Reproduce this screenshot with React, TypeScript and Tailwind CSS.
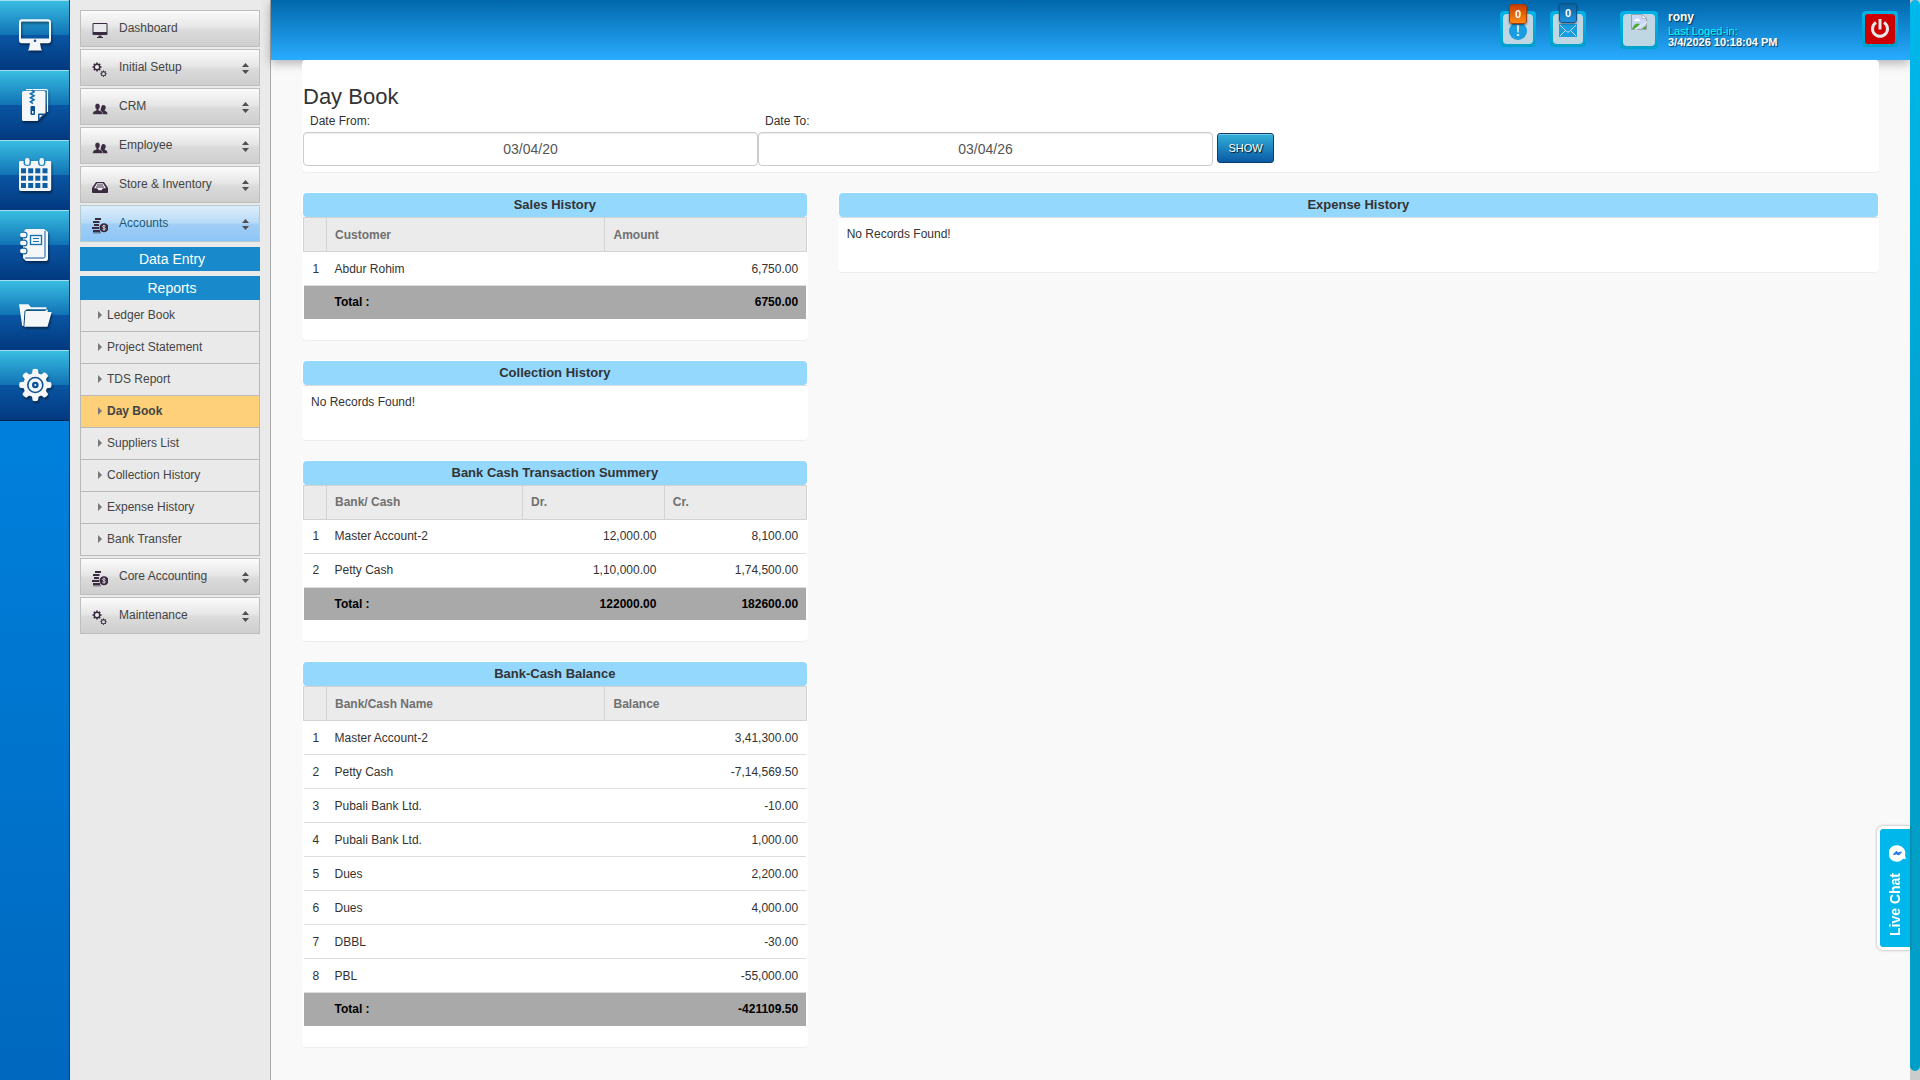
import { useState } from 'react';
import type { ReactNode } from 'react';

type IconProps = { className?: string };

/* ---------- Rail icons ---------- */

function RailSvg({ children }: { children: ReactNode }) {
  return (
    <svg
      viewBox="0 0 34 34"
      className="h-[34px] w-[34px] fill-[#f4f6f8] drop-shadow-[1px_2px_1px_rgba(0,0,0,0.45)]"
      aria-hidden="true"
    >
      {children}
    </svg>
  );
}

function DesktopIcon() {
  return (
    <RailSvg>
      <path
        fillRule="evenodd"
        d="M4 1.3h26a3 3 0 0 1 3 3v18a3 3 0 0 1-3 3H4a3 3 0 0 1-3-3v-18a3 3 0 0 1 3-3zM4 3.5a1 1 0 0 0-1 1v16h28v-16a1 1 0 0 0-1-1z"
      />
      <path d="M12 25h10l1 5.500 1 2H10l1-2z" />
      <circle cx="17" cy="22.800" r="1.300" fill="#0b4f94" />
    </RailSvg>
  );
}

function ArchiveIcon() {
  return (
    <RailSvg>
      <path d="M8 1.600h20a1.500 1.500 0 0 1 1.500 1.500V24" fill="none" stroke="#f4f6f8" strokeWidth="1.200" />
      <path d="M5.500 3H26a1.500 1.500 0 0 1 1.500 1.500V25l-8 8h-14A1.500 1.500 0 0 1 4 31.500v-27A1.500 1.500 0 0 1 5.500 3z" />
      <path d="M20 32.500v-6a1 1 0 0 1 1-1h6z" fill="#0b4f94" />
      <path d="M21.500 30v-3h3z" />
      <path
        d="M14 2l2 1.800-3.500 2 3.500 2-3.500 2 3.500 2-3.500 2 2.500 1.800"
        fill="none"
        stroke="#1570b0"
        strokeWidth="1.600"
      />
      <rect x="12.500" y="18" width="4.500" height="9" rx="1" fill="#0b4f94" />
      <rect x="14" y="23" width="1.500" height="2.500" />
    </RailSvg>
  );
}

function CalendarIcon() {
  return (
    <RailSvg>
      <path d="M2 3h30a1.200 1.200 0 0 1 1.200 1.200V31A2 2 0 0 1 31 33H3a2 2 0 0 1-2-2V4.200A1.200 1.200 0 0 1 2 3z" />
      <g fill="#1e84bf">
        <rect x="5.500" y="1" width="7.500" height="7" rx="3.500" />
        <rect x="20" y="1" width="7.500" height="7" rx="3.500" />
      </g>
      <rect x="7" y="0" width="4.500" height="7" rx="2.200" />
      <rect x="21.500" y="0" width="4.500" height="7" rx="2.200" />
      {[10.3, 17.7, 25].map((y) =>
        [3, 10.2, 17.3, 24.5].map((x) => <rect key={`${x}-${y}`} x={x} y={y} width="5" height="5" fill="#0e5ea3" />),
      )}
    </RailSvg>
  );
}

function NotebookIcon() {
  return (
    <RailSvg>
      <path d="M8 1h18l4 3v27a2 2 0 0 1-2 2H8l-3-3V4z" />
      <path d="M27 3v25.500a1.500 1.500 0 0 1-1.500 1.500H7" fill="none" stroke="#0d5aa0" strokeWidth="1" />
      <rect x="12.500" y="7.500" width="11" height="9" fill="none" stroke="#1272b3" strokeWidth="1.300" />
      <path d="M15 10.500h6M15 13.500h6" stroke="#1272b3" strokeWidth="1.200" />
      {[7, 15, 23].map((y) => (
        <g key={y}>
          <circle cx="6" cy={y} r="3.500" fill="#0d5aa0" />
          <rect x="2" y={y - 2.2} width="6.500" height="4.400" rx="2.200" />
        </g>
      ))}
    </RailSvg>
  );
}

function FolderIcon() {
  return (
    <RailSvg>
      <path d="M1 6.300h9.500l2.500 3h15.500v2H9L6.500 13 5.500 28H4.200z" />
      <path d="M7.500 13H27l1.500-1.300H30L29.500 14H33.700L29.500 28.700H6.300z" />
    </RailSvg>
  );
}

function GearIcon() {
  return (
    <RailSvg>
      {[0, 45, 90, 135, 180, 225, 270, 315].map((angle) => (
        <path key={angle} d="M13.800 7l.8-5.500Q17.300 0 20 1.500l.8 5.500z" transform={`rotate(${angle} 17.300 17)`} />
      ))}
      <circle cx="17.300" cy="17" r="12" />
      <circle cx="17.300" cy="17" r="7.500" fill="none" stroke="#0b5299" strokeWidth="1.600" />
      <circle cx="17.300" cy="17" r="3.300" fill="#0b5299" />
      <circle cx="17.300" cy="17" r="1" />
    </RailSvg>
  );
}

/* ---------- Menu icons ---------- */

function MonitorSmall({ className }: IconProps) {
  return (
    <svg viewBox="0 0 16 16" className={className} aria-hidden="true">
      <path d="M1.500 0h13A1 1 0 0 1 15.500 1v10a1 1 0 0 1-1 1h-13a1 1 0 0 1-1-1V1a1 1 0 0 1 1-1z" />
      <path d="M1.500 1h13v8h-13z" fill="#e9e9e9" />
      <path d="M6.500 12.500h3v1.500H11V15H5v-1h1.500z" />
    </svg>
  );
}

function CogsSmall({ className }: IconProps) {
  const teeth = [0, 45, 90, 135];
  return (
    <svg viewBox="0 0 16 16" className={className} aria-hidden="true">
      {teeth.map((a) => (
        <g key={a}>
          <rect x="4.200" y="0.500" width="1.600" height="9" transform={`rotate(${a} 5 5)`} />
          <rect x="11" y="8.500" width="1" height="6.400" transform={`rotate(${a} 11.500 11.700)`} />
        </g>
      ))}
      <circle cx="5" cy="5" r="3.400" />
      <circle cx="5" cy="5" r="2" fill="#ececec" />
      <circle cx="11.500" cy="11.700" r="2.400" />
      <circle cx="11.500" cy="11.700" r="1.500" fill="#dcdcdc" />
    </svg>
  );
}

function UsersSmall({ className }: IconProps) {
  return (
    <svg viewBox="0 0 16 16" className={className} aria-hidden="true">
      <path d="M11.500 4c1.400 0 2.200 1 2.200 2.400 0 1-.4 2-1 2.600v.8c1.600.5 2.800 1.200 2.800 3.400H10L8.500 9.500 9.300 6c.2-1.200 1-2 2.200-2z" />
      <path
        d="M5.500 2.500C7.200 2.500 8 3.700 8 5.300c0 1.200-.5 2.400-1.200 3v1c2 .6 4 1.400 4 4.200H.5c0-2.800 1.800-3.600 3.700-4.200v-1C3.500 7.700 3 6.500 3 5.300c0-1.600.8-2.800 2.500-2.800z"
        stroke="#e4e4e4"
        strokeWidth="0.500"
      />
    </svg>
  );
}

function InboxSmall({ className }: IconProps) {
  return (
    <svg viewBox="0 0 16 16" className={className} aria-hidden="true">
      <path d="M4 3h8l4 6v4a1 1 0 0 1-1 1H1a1 1 0 0 1-1-1V9z" />
      <path d="M5 4.300h6l3 5h-3l-1.500 2h-3L5 9.300H2z" fill="#efefef" />
      <path d="M5 6h6M4 8h8" stroke="#3a2b40" strokeWidth="1" />
    </svg>
  );
}

function CoinsSmall({ className }: IconProps) {
  return (
    <svg viewBox="0 0 16 16" className={className} aria-hidden="true">
      <path d="M3 0h6v2H3zM1 3h6.500v2H1zM2 6h5v2H2zM0 9h7v2H0zM1 12h7v2H1zM1 14.500h8v.8H1z" />
      <circle cx="12" cy="9.700" r="4.500" />
      <path
        d="M13.600 8.200c-.6-.9-3-.9-3.100.3-.1 1.400 3 .9 3 2.300 0 1.300-2.500 1.300-3.200.4M12 6.800v5.800"
        fill="none"
        stroke="#e8e8e8"
        strokeWidth="0.800"
      />
    </svg>
  );
}

function SortArrows() {
  return (
    <svg viewBox="0 0 7 11" className="h-[11px] w-[7px] fill-[#4f4f4f]" aria-hidden="true">
      <path d="M3.500 0L7 4H0zM3.500 11L0 7h7z" />
    </svg>
  );
}

/* ---------- Data ---------- */

const railItems = [
  { label: 'Desktop', Icon: DesktopIcon },
  { label: 'Archive', Icon: ArchiveIcon },
  { label: 'Calendar', Icon: CalendarIcon },
  { label: 'Notebook', Icon: NotebookIcon },
  { label: 'Files', Icon: FolderIcon },
  { label: 'Settings', Icon: GearIcon },
];

const topMenu = [
  { label: 'Dashboard', Icon: MonitorSmall, expandable: false },
  { label: 'Initial Setup', Icon: CogsSmall, expandable: true },
  { label: 'CRM', Icon: UsersSmall, expandable: true },
  { label: 'Employee', Icon: UsersSmall, expandable: true },
  { label: 'Store & Inventory', Icon: InboxSmall, expandable: true },
  { label: 'Accounts', Icon: CoinsSmall, expandable: true },
];

const bottomMenu = [
  { label: 'Core Accounting', Icon: CoinsSmall, expandable: true },
  { label: 'Maintenance', Icon: CogsSmall, expandable: true },
];

const reports = [
  'Ledger Book',
  'Project Statement',
  'TDS Report',
  'Day Book',
  'Suppliers List',
  'Collection History',
  'Expense History',
  'Bank Transfer',
];

const balances = [
  ['Master Account-2', '3,41,300.00'],
  ['Petty Cash', '-7,14,569.50'],
  ['Pubali Bank Ltd.', '-10.00'],
  ['Pubali Bank Ltd.', '1,000.00'],
  ['Dues', '2,200.00'],
  ['Dues', '4,000.00'],
  ['DBBL', '-30.00'],
  ['PBL', '-55,000.00'],
];

/* ---------- Pieces ---------- */

type MenuItemProps = {
  label: string;
  Icon: (props: IconProps) => ReactNode;
  expandable: boolean;
  active?: boolean;
};

function MenuItem({ label, Icon, expandable, active }: MenuItemProps) {
  return (
    <button
      type="button"
      className={`flex h-[37px] w-full items-center border pr-[10px] pl-[11px] text-left text-xs ${
        active
          ? 'border-[#b3cbd3] bg-[linear-gradient(#deeefb,#b9dcf8_46%,#9fcdf6_54%,#8ec6f6)] text-[#1b5878]'
          : 'border-[#bfbfbf] bg-[linear-gradient(#fbfbfb,#e6e6e6_46%,#dbdbdb_54%,#cecece)] text-[#444]'
      }`}
    >
      <Icon className="mt-1 h-4 w-4 shrink-0 fill-[#3a2b40]" />
      <span className="flex-1 pb-0.5 pl-[11px]">{label}</span>
      {expandable && (
        <span className="pt-0.5">
          <SortArrows />
        </span>
      )}
    </button>
  );
}

function SectionButton({ label }: { label: string }) {
  return (
    <button type="button" className="mt-[5px] block h-6 w-full bg-[#188acb] pl-1 text-center text-sm leading-6 text-white">
      {label}
    </button>
  );
}

function Panel({ title, children }: { title: string; children: ReactNode }) {
  return (
    <section className="mb-5 rounded bg-white p-px shadow-[0_1px_1px_rgba(0,0,0,0.05)]">
      <h2 className="h-6 rounded bg-[#94d8fe] text-center text-[13px] leading-6 font-bold text-[#333]">{title}</h2>
      {children}
    </section>
  );
}

function EmptyPanel({ title }: { title: string }) {
  return (
    <Panel title={title}>
      <p className="h-[54px] border-t border-[#ddd] px-2 pt-2 text-xs leading-[17px]">No Records Found!</p>
    </Panel>
  );
}

type LedgerProps = {
  title: string;
  columns: string[];
  rows: string[][];
  totals: string[];
  nameWidth: string;
};

function LedgerPanel({ title, columns, rows, totals, nameWidth }: LedgerProps) {
  return (
    <Panel title={title}>
      <table className="mb-5 w-full table-fixed border-collapse text-xs">
        <colgroup>
          <col className="w-[23px]" />
          <col className={nameWidth} />
          {columns.slice(1).map((c) => (
            <col key={c} />
          ))}
        </colgroup>
        <thead>
          <tr className="h-[34px] bg-[#ebebeb] text-left text-[#707070]">
            <th className="border border-[#d3d3d3]" />
            {columns.map((c) => (
              <th key={c} className="border border-[#d3d3d3] px-2 font-bold">
                {c}
              </th>
            ))}
          </tr>
        </thead>
        <tbody>
          {rows.map(([name, ...values], i) => (
            <tr key={i} className="h-[34px] border-b border-[#ddd]">
              <td className="pl-[9px]">{i + 1}</td>
              <td className="px-2">{name}</td>
              {values.map((v, j) => (
                <td key={j} className="px-2 text-right">
                  {v}
                </td>
              ))}
            </tr>
          ))}
          <tr className="h-[33px] bg-[#a9a9a9] font-bold text-black">
            <td />
            <td className="px-2">Total :</td>
            {totals.map((t) => (
              <td key={t} className="px-2 text-right">
                {t}
              </td>
            ))}
          </tr>
        </tbody>
      </table>
    </Panel>
  );
}

function DateField({ id, label, initial }: { id: string; label: string; initial: string }) {
  const [value, setValue] = useState(initial);
  return (
    <div className="max-w-[455px] flex-1">
      <label htmlFor={id} className="block pb-0.5 pl-[7px] text-xs leading-[17px]">
        {label}
      </label>
      <input
        id={id}
        type="text"
        value={value}
        onChange={(e) => setValue(e.target.value)}
        className="block h-[34px] w-full rounded border border-[#ccc] bg-white text-center text-sm text-[#555] shadow-[inset_0_1px_1px_rgba(0,0,0,0.075)]"
      />
    </div>
  );
}

const frame = 'h-9 w-9 rounded bg-[linear-gradient(#00b3e6,#00a0cc)] p-[3px]';

function Header() {
  return (
    <header className="flex h-[60px] items-start justify-end bg-[linear-gradient(#0067ab,#29acff)] pt-[11px] pr-3 shadow-[0_3px_10px_rgba(0,0,0,0.3)]">
      <button type="button" aria-label="Alerts" className={`relative mr-[14px] ${frame}`}>
        <span className="flex h-full items-center justify-center rounded bg-[#bfd6e3]">
          <svg viewBox="0 0 18 18" className="mt-1 h-[18px] w-[18px]" aria-hidden="true">
            <circle cx="9" cy="9" r="9" fill="#189de0" />
            <path d="M7.800 3h2.400l-.4 7.500H8.200zM7.800 12h2.400v2H7.800z" fill="#d5e3ec" />
          </svg>
        </span>
        <span className="absolute -top-[7px] left-[9px] flex h-5 w-[18px] items-center justify-center rounded-[3px] border border-[#a63a00] bg-[linear-gradient(#c83c00,#ff8a12)] text-[11px] font-bold text-white shadow-[0_1px_2px_rgba(0,0,0,0.5)]">
          0
        </span>
      </button>
      <button type="button" aria-label="Messages" className={`relative mr-[34px] ${frame}`}>
        <span className="flex h-full items-center justify-center rounded bg-[#bfd6e3]">
          <svg viewBox="0 0 18 13" className="mt-[3px] h-[13px] w-[18px]" aria-hidden="true">
            <rect width="18" height="13" fill="#189de0" />
            <path
              d="M1 1l6.500 6.500q1.500 1.300 3 0L17 1M1 12l5.500-5.500M17 12l-5.500-5.500"
              fill="none"
              stroke="#c9dde9"
              strokeWidth="1"
            />
          </svg>
        </span>
        <span className="absolute -top-[8px] left-[9px] flex h-5 w-[18px] items-center justify-center rounded-[3px] border border-[#08548c] bg-[linear-gradient(#0a5f9c,#2292dc)] text-[11px] font-bold text-white shadow-[0_1px_2px_rgba(0,0,0,0.5)]">
          0
        </span>
      </button>
      <div className="h-[38px] w-[38px] rounded bg-[linear-gradient(#00b3e6,#00a0cc)] p-[3px]">
        {/* broken avatar placeholder */}
        <div className="flex h-full justify-center rounded bg-[#bfd6e3]">
          <svg viewBox="0 0 16 16" className="h-4 w-4" role="img" aria-label="avatar">
            <path d="M.5.5h10.500l4.500 4V15.500H.5z" fill="#c8d8f6" stroke="#9aa3ad" />
            <path d="M11 .5v4h4.500z" fill="#fff" stroke="#9aa3ad" strokeWidth="0.700" />
            <path d="M3 7q0-2 2-2 1-1.500 2.500 0Q9 5.200 9 7z" fill="#fff" />
            <path d="M1 15q3-7 8-5l-5 5z" fill="#4faa35" />
            <path d="M4 15.500l12-7.500" stroke="#dfe8f0" strokeWidth="1.800" />
            <path d="M10.500 15l4.500-3.500V15z" fill="#4faa35" />
          </svg>
        </div>
      </div>
      <div className="ml-[10px] w-[194px] text-[11px] leading-[11px] text-white [text-shadow:1px_1px_1px_rgba(0,0,0,0.6)]">
        <div className="pb-0.5 text-xs leading-[13px] font-bold">rony</div>
        <div className="text-[#00ffff]">Last Loged-in:</div>
        <div className="font-bold">3/4/2026 10:18:04 PM</div>
      </div>
      <button type="button" aria-label="Log out" className={frame}>
        <span className="flex h-full items-center justify-center rounded-[3px] bg-[#cc0000]">
          <svg viewBox="0 0 20 20" className="h-5 w-5" fill="none" stroke="#e9e9e9" strokeWidth="3" aria-hidden="true">
            <path d="M6 3.500a7.500 7.500 0 1 0 8 0M10 0v10.500" />
          </svg>
        </span>
      </button>
    </header>
  );
}

export default function App() {
  return (
    <div className="flex min-h-screen bg-[#f9f9f9] font-['Liberation_Sans',Arial,sans-serif] text-[#333]">
      {/* Icon rail */}
      <nav
        aria-label="Shortcuts"
        className="w-[70px] shrink-0 border-r border-[#00467f] bg-[linear-gradient(#0090f0,#0068be)]"
      >
        {railItems.map(({ label, Icon }) => (
          <button
            key={label}
            type="button"
            aria-label={label}
            className="flex h-[70px] w-full items-center justify-center border-t border-[#a5dcee] bg-[linear-gradient(#39bde2,#1173b5_49%,#0a55a3_50%,#02397f)] pb-0.5"
          >
            <Icon />
          </button>
        ))}
        <div className="h-px bg-[#02234d]" />
      </nav>

      {/* Side menu */}
      <aside className="w-[201px] shrink-0 border-r border-[#a9a9a9] bg-[#eaeaea] px-[10px] pt-[10px]">
        <div className="flex flex-col gap-0.5">
          {topMenu.map((item) => (
            <MenuItem key={item.label} {...item} active={item.label === 'Accounts'} />
          ))}
        </div>
        <SectionButton label="Data Entry" />
        <SectionButton label="Reports" />
        <ul className="mb-0.5 border-x border-[#b9b9b9]">
          {reports.map((name) => (
            <li key={name}>
              <a
                href="#"
                className={`flex h-8 items-center border-b border-[#b9b9b9] pb-0.5 pl-[17px] text-xs text-[#444] ${
                  name === 'Day Book' ? 'bg-[#fed079] font-bold' : ''
                }`}
              >
                <svg viewBox="0 0 4 8" className="mr-[5px] h-2 w-1 fill-[#777]" aria-hidden="true">
                  <path d="M0 0l4 4-4 4z" />
                </svg>
                {name}
              </a>
            </li>
          ))}
        </ul>
        <div className="flex flex-col gap-0.5">
          {bottomMenu.map((item) => (
            <MenuItem key={item.label} {...item} />
          ))}
        </div>
      </aside>

      <div className="min-w-0 flex-1">
        <Header />

        <main className="relative px-[31px]">
          <form
            className="mb-5 h-28 rounded bg-white px-px pt-[22px] shadow-[0_1px_1px_rgba(0,0,0,0.05)]"
            onSubmit={(e) => e.preventDefault()}
          >
            <h1 className="pb-px text-[22px] leading-[30px]">Day Book</h1>
            <div className="flex items-end">
              <DateField id="date-from" label="Date From:" initial="03/04/20" />
              <DateField id="date-to" label="Date To:" initial="03/04/26" />
              <button
                type="submit"
                className="mb-[3px] ml-1 h-[30px] w-[57px] rounded-[3px] border border-[#0a3c70] bg-[linear-gradient(#33b0d8,#0a5aa5)] text-[11px] text-white shadow-[inset_0_1px_0_rgba(255,255,255,0.35)] [text-shadow:1px_1px_1px_rgba(0,0,0,0.9)]"
              >
                SHOW
              </button>
            </div>
          </form>

          <div className="-mx-[15px] flex items-start">
            <div className="w-1/3 px-[15px]">
              <LedgerPanel
                title="Sales History"
                columns={['Customer', 'Amount']}
                rows={[['Abdur Rohim', '6,750.00']]}
                totals={['6750.00']}
                nameWidth="w-[55.4%]"
              />
              <EmptyPanel title="Collection History" />
              <LedgerPanel
                title="Bank Cash Transaction Summery"
                columns={['Bank/ Cash', 'Dr.', 'Cr.']}
                rows={[
                  ['Master Account-2', '12,000.00', '8,100.00'],
                  ['Petty Cash', '1,10,000.00', '1,74,500.00'],
                ]}
                totals={['122000.00', '182600.00']}
                nameWidth="w-[39%]"
              />
              <LedgerPanel
                title="Bank-Cash Balance"
                columns={['Bank/Cash Name', 'Balance']}
                rows={balances}
                totals={['-421109.50']}
                nameWidth="w-[55.4%]"
              />
            </div>
            <div className="w-2/3 px-[15px]">
              <EmptyPanel title="Expense History" />
            </div>
          </div>
        </main>
      </div>

      {/* Page scroll track */}
      <div className="w-[10px] shrink-0 bg-[#ccc] pb-[9px]">
        <div className="h-full rounded-full bg-[linear-gradient(#00b8ec,#009fc8_50%)]" />
      </div>

      {/* Live chat tab */}
      <a
        href="#"
        className="fixed right-[10px] bottom-[130px] flex h-[124px] w-[33px] flex-col items-center gap-[11px] rounded-l-md border-y-3 border-l-3 border-white bg-[#00b7ec] pt-4 text-sm font-bold text-white shadow-[0_0_3px_rgba(0,0,0,0.35)]"
      >
        <svg viewBox="0 0 17 17" className="ml-1 h-[17px] w-[17px] shrink-0" aria-hidden="true">
          <path d="M8.300.3a8 8 0 0 1 7.700 10.200l1 3.500-3-.2A8.200 8.200 0 1 1 8.300.3z" fill="#fff" />
          <path d="M4.500 9.500L7 6.500l2.500 1.200L12.500 7 9.800 10 7.500 9z" fill="#2a7de8" stroke="#2a7de8" />
        </svg>
        <span className="rotate-180 leading-[18px] [writing-mode:vertical-rl]">Live Chat</span>
      </a>
    </div>
  );
}
